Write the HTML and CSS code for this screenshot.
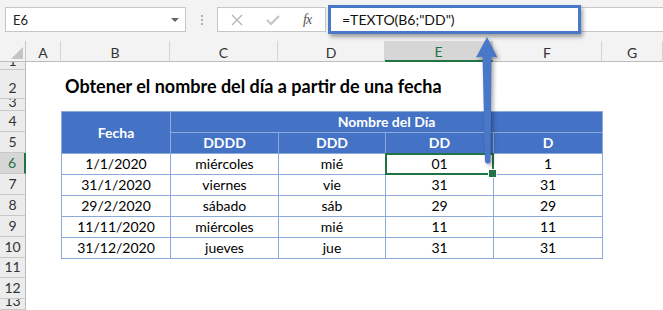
FILE: index.html
```html
<!DOCTYPE html>
<html lang="es">
  <head>
    <meta charset="UTF-8" />
    <title>TEXTO - nombre del día</title>
    <link rel="stylesheet" href="styles.css">
  </head>
  <body>
    <div class="formula-bar">
      <div class="name-box">
        <span>E6</span>
        <span class="caret"></span>
      </div>
      <div class="grip"><i></i><i></i><i></i></div>
      <div class="fx-buttons">
        <svg class="fx-icon" width="12" height="12" viewBox="0 0 12 12">
          <path d="M1 1 L11 11 M11 1 L1 11" stroke="#b4b4b4" stroke-width="1.3" fill="none" />
        </svg>
        <svg class="fx-icon" width="14" height="12" viewBox="0 0 14 12">
          <path d="M1 6 L5 10 L13 2" stroke="#c4c4c4" stroke-width="2" fill="none" />
        </svg>
        <span class="fx">fx</span>
      </div>
      <div class="formula-input">
        <span>=TEXTO(B6;"DD")</span>
        <div class="callout"></div>
      </div>
    </div>

    <div class="sheet">
      <div class="corner"></div>
      <div class="col-head">A</div>
      <div class="col-head">B</div>
      <div class="col-head">C</div>
      <div class="col-head">D</div>
      <div class="col-head active">E</div>
      <div class="col-head">F</div>
      <div class="col-head">G</div>

      <div class="row-head short">1</div>
      <div class="row-head">2</div>
      <div class="row-head short">3</div>
      <div class="row-head">4</div>
      <div class="row-head">5</div>
      <div class="row-head active">6</div>
      <div class="row-head">7</div>
      <div class="row-head">8</div>
      <div class="row-head">9</div>
      <div class="row-head">10</div>
      <div class="row-head">11</div>
      <div class="row-head">12</div>
      <div class="row-head short">13</div>

      <h1 class="sheet-title">Obtener el nombre del día a partir de una fecha</h1>

      <table class="day-table">
        <colgroup>
          <col class="w109" /><col class="w108" /><col class="w107" /><col class="w108" /><col class="w109" />
        </colgroup>
        <thead>
          <tr>
            <th rowspan="2">Fecha</th>
            <th colspan="4">Nombre del Día</th>
          </tr>
          <tr>
            <th>DDDD</th>
            <th>DDD</th>
            <th>DD</th>
            <th>D</th>
          </tr>
        </thead>
        <tbody>
          <tr><td>1/1/2020</td><td>miércoles</td><td>mié</td><td class="selected">01</td><td>1</td></tr>
          <tr><td>31/1/2020</td><td>viernes</td><td>vie</td><td>31</td><td>31</td></tr>
          <tr><td>29/2/2020</td><td>sábado</td><td>sáb</td><td>29</td><td>29</td></tr>
          <tr><td>11/11/2020</td><td>miércoles</td><td>mié</td><td>11</td><td>11</td></tr>
          <tr><td>31/12/2020</td><td>jueves</td><td>jue</td><td>31</td><td>31</td></tr>
        </tbody>
      </table>
    </div>

    <!-- callout arrow pointing at the formula -->
    <svg class="arrow" width="28" height="134" viewBox="0 0 28 134">
      <path d="M15 3 L25.5 23.5 Q15 21.5 4 23.5 Z" fill="#4a78c8" />
      <path d="M10.5 21 L19.5 21 L18.5 128 Q16 131.5 13 128 Z" fill="#4a78c8" />
    </svg>
  </body>
</html>
```

FILE: styles.css
```css
* {
  margin: 0;
  padding: 0;
  box-sizing: border-box;
}

body {
  width: 663px;
  height: 310px;
  overflow: hidden;
  font-family: Lato, 'Open Sans', sans-serif;
  background: #fff;
  color: #000;
}

/* formula bar */
.formula-bar {
  display: flex;
  align-items: flex-start;
  height: 41px;
  padding: 7px 0 0 5px;
  background: #f3f3f3;
}

.name-box {
  width: 181px;
  height: 25px;
  background: #fff;
  border: 1px solid #c6c6c6;
  display: flex;
  align-items: center;
  justify-content: space-between;
  padding: 0 6px 0 7px;
  font-size: 13px;
  color: #222;
}

.caret {
  width: 0;
  height: 0;
  border-left: 4px solid transparent;
  border-right: 4px solid transparent;
  border-top: 4px solid #666;
}

.grip {
  width: 31px;
  height: 25px;
  display: flex;
  flex-direction: column;
  align-items: center;
  justify-content: center;
  gap: 2px;
}

.grip i {
  width: 2px;
  height: 2px;
  background: #b0b0b0;
}

.fx-buttons {
  width: 109px;
  height: 25px;
  background: #fff;
  border: 1px solid #c6c6c6;
  display: flex;
  align-items: center;
  padding-left: 13px;
  gap: 23px;
}

.fx {
  font-family: 'Liberation Serif', serif;
  font-style: italic;
  font-size: 14px;
  color: #555;
  letter-spacing: -1px;
}

.formula-input {
  position: relative;
  flex: 1;
  height: 25px;
  margin-left: 4px;
  background: #fff;
  border: 1px solid #c6c6c6;
  border-right: none;
  display: flex;
  align-items: center;
  padding-left: 11px;
  font-size: 14px;
  color: #111;
}

.callout {
  position: absolute;
  left: -3px;
  top: -3px;
  width: 253px;
  height: 29px;
  border: 3px solid #4a78c8;
  box-shadow: 2px 3px 4px rgba(0, 0, 0, 0.35);
}

/* sheet grid */
.sheet {
  display: grid;
  grid-template-columns: 26px 35px 109px 108px 107px 108px 109px 61px;
  grid-template-rows: 21px 8px 29px 12px repeat(7, 21px) 20px 21px 11px;
}

.corner {
  background: #f3f3f3;
  border-right: 1px solid #c8c8c8;
  border-bottom: 1px solid #bdbdbd;
  position: relative;
}

.corner::after {
  content: '';
  position: absolute;
  right: 2px;
  bottom: 2px;
  border-left: 12px solid transparent;
  border-bottom: 12px solid #c4c4c4;
}

.col-head {
  background: #f3f3f3;
  border-right: 1px solid #d4d4d4;
  border-bottom: 1px solid #bdbdbd;
  display: flex;
  align-items: center;
  justify-content: center;
  padding-top: 2px;
  font-size: 14px;
  color: #333;
}

.col-head.active {
  background: #d6d6d6;
  border-bottom: 2px solid #217346;
  color: #217346;
}

.row-head {
  grid-column: 1;
  background: #ececec;
  border-right: 1px solid #bcbcbc;
  border-bottom: 1px solid #c9c9c9;
  display: flex;
  align-items: flex-end;
  justify-content: center;
  overflow: hidden;
  padding-bottom: 2px;
  font-size: 14px;
  line-height: 16px;
  color: #333;
}

/* rows lower than the label: the digit is clipped at the top */
.row-head.short {
  line-height: 6px;
  padding-bottom: 5px;
}

.row-head.active {
  background: #d6d6d6;
  border-right: 2px solid #217346;
  color: #217346;
}

.sheet-title {
  grid-column: 3 / 9;
  grid-row: 3;
  align-self: end;
  padding: 0 0 2px 4px;
  font-size: 18px;
  font-weight: 700;
  white-space: nowrap;
}

.day-table {
  grid-column: 3 / 8;
  grid-row: 5 / 12;
  width: 541px;
  table-layout: fixed;
  border-collapse: collapse;
  font-size: 14px;
  text-align: center;
}

.w109 { width: 109px; }
.w108 { width: 108px; }
.w107 { width: 107px; }

.day-table tr {
  height: 21px;
}

.day-table th,
.day-table td {
  border: 1px solid #8eaadb;
  padding: 0;
  line-height: 18px;
}

.day-table th {
  background: #4472c4;
  color: #fff;
  font-weight: 700;
}

.day-table td.selected {
  position: relative;
}

.day-table td.selected::after {
  content: '';
  position: absolute;
  inset: -1px;
  border: 2px solid #217346;
}

.day-table td.selected::before {
  content: '';
  position: absolute;
  right: -4px;
  bottom: -4px;
  width: 7px;
  height: 7px;
  background: #217346;
  border: 1px solid #fff;
  z-index: 1;
}

.arrow {
  position: absolute;
  left: 472px;
  top: 34px;
  filter: drop-shadow(2px 2px 2px rgba(0, 0, 0, 0.35));
}
```
